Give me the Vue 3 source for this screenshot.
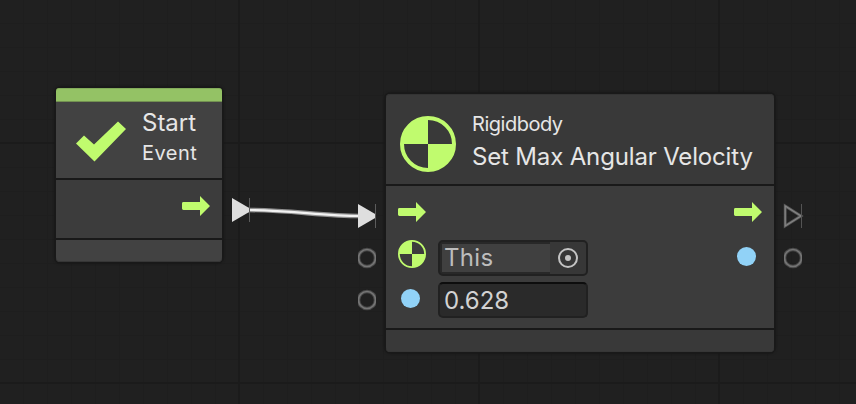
<script setup>
const arrow = 'M0 7.4Q0 6 1.4 6H18V0L28 10L18 20V14H1.4Q0 14 0 12.6Z'
const ports = [
  { x: 358, y: 247 },
  { x: 358, y: 289 },
  { x: 784, y: 247 },
]
</script>

<template>
  <main class="graph">
    <section class="node start">
      <div class="accent"></div>
      <header class="head">
        <svg class="check" width="50" height="42" viewBox="0 0 50 42">
          <path d="M0 22.5L8 14.5L18 23.5L42 0.5L50 8L18.5 40.5Z" fill="#c0fb6e" />
        </svg>
        <div class="titles">
          <div class="title">Start</div>
          <div class="sub">Event</div>
        </div>
      </header>
      <div class="body">
        <svg class="flow" width="28" height="20" viewBox="0 0 28 20"><path :d="arrow" /></svg>
      </div>
      <footer class="foot"></footer>
    </section>

    <section class="node unit">
      <header class="head">
        <svg class="rigid" width="56" height="56" viewBox="0 0 56 56">
          <circle cx="28" cy="28" r="26" />
          <path d="M28 28V2A26 26 0 0 0 2 28ZM28 28H54A26 26 0 0 1 28 54Z" />
        </svg>
        <div class="titles">
          <div class="sub">Rigidbody</div>
          <div class="title">Set Max Angular Velocity</div>
        </div>
      </header>
      <div class="body">
        <div class="col">
          <div class="row">
            <svg class="flow" width="28" height="20" viewBox="0 0 28 20"><path :d="arrow" /></svg>
          </div>
          <div class="row">
            <svg class="rigid small" width="28" height="28" viewBox="0 0 28 28">
              <circle cx="14" cy="14" r="13.1" />
              <path d="M14 14V1A13 13 0 0 0 1 14ZM14 14H27A13 13 0 0 1 14 27Z" />
            </svg>
            <div class="field object">
              <span class="value">This</span>
              <span class="picker">
                <svg width="20" height="20" viewBox="0 0 20 20">
                  <circle cx="10" cy="10" r="9" fill="none" stroke="#c4c4c4" stroke-width="2" />
                  <circle cx="10" cy="10" r="3" fill="#c4c4c4" />
                </svg>
              </span>
            </div>
          </div>
          <div class="row">
            <span class="dot"></span>
            <div class="field number">0.628</div>
          </div>
        </div>
        <div class="col out">
          <div class="row">
            <svg class="flow" width="28" height="20" viewBox="0 0 28 20"><path :d="arrow" /></svg>
          </div>
          <div class="row"><span class="dot"></span></div>
        </div>
      </div>
      <footer class="foot"></footer>
    </section>

    <svg class="wires" width="856" height="404" viewBox="0 0 856 404">
      <path d="M248 210C288 210 324 216 360 216" fill="none" stroke="#8f8f8f" stroke-width="4.6" />
      <path d="M248 210C288 210 324 216 360 216" fill="none" stroke="#f2f2f2" stroke-width="2.2" />
      <path d="M232 198L250 208.5V211.5L232 222Z" fill="#dedede" />
      <path d="M358 204L376 214.5V217.5L358 228Z" fill="#dedede" />
      <path d="M249.5 198V222M375.5 204V228" stroke="#5c5c5c" stroke-width="1" />
      <path d="M785.2 206L801 216L785.2 226Z" fill="none" stroke="#5a5a5a" stroke-width="2.8" />
      <path d="M785.2 206L801 216L785.2 226Z" fill="none" stroke="#858585" stroke-width="1.2" />
      <path d="M801.5 204V228" stroke="#545454" stroke-width="1" />
      <svg v-for="p in ports" :key="p.x + '-' + p.y" :x="p.x" :y="p.y" width="18" height="22">
        <circle cx="9" cy="11" r="8.5" fill="none" stroke="#484848" stroke-width="3.6" />
        <circle cx="9" cy="11" r="8.5" fill="none" stroke="#757575" stroke-width="1.7" />
      </svg>
    </svg>
  </main>
</template>

<style>
body {
  margin: 0;
  background: #202020;
}
</style>

<style scoped>
.graph {
  position: relative;
  width: 856px;
  height: 404px;
  overflow: hidden;
  font-family: Inter, "Liberation Sans", sans-serif;
  color: #e6e6e6;
  background-color: #202020;
  background-image:
    linear-gradient(90deg, #1b1b1b 2px, transparent 2px),
    linear-gradient(#1b1b1b 2px, transparent 2px),
    linear-gradient(90deg, #1e1e1e 1px, transparent 1px),
    linear-gradient(#1e1e1e 1px, transparent 1px);
  background-size: 240px 240px, 240px 240px, 24px 24px, 24px 24px;
  background-position: 238px 142px, 238px 142px, 23px 23px, 23px 23px;
}
.node {
  position: absolute;
  display: flex;
  flex-direction: column;
  border-radius: 4px;
  box-shadow: 0 0 0 1.5px #191919, 0 0 3px 1px #151515;
}
.start {
  left: 56px;
  top: 88px;
  width: 166px;
  height: 174px;
}
.unit {
  left: 386px;
  top: 94px;
  width: 388px;
  height: 258px;
}
.accent {
  box-sizing: border-box;
  height: 14px;
  background: #94c265;
  border-radius: 3px 3px 0 0;
  border-top: 1px solid #83ab5b;
  border-bottom: 1px solid #739151;
}
.head {
  display: flex;
  box-sizing: border-box;
  border-bottom: 2px solid #191919;
}
.start .head {
  height: 78px;
  padding: 6px 0 0 20px;
  gap: 16px;
  background: #424242;
}
.unit .head {
  height: 92px;
  padding: 17px 0 0 14px;
  gap: 16px;
  background: #393939;
  border-radius: 4px 4px 0 0;
  box-shadow: inset 0 1px 0 #333;
}
.check {
  margin-top: 13px;
}
.rigid {
  margin-top: 5px;
  fill: #c0fb6e;
}
.rigid circle {
  fill: none;
  stroke: #c0fb6e;
  stroke-width: 4;
}
.rigid.small {
  margin: -8px 0 0;
}
.rigid.small circle {
  stroke-width: 1.8;
}
.titles {
  white-space: nowrap;
}
.title {
  font-size: 24px;
  line-height: 30px;
}
.sub {
  font-size: 20px;
  line-height: 26px;
}
.start .sub {
  margin-top: 2px;
  letter-spacing: 0.45px;
}
.unit .title {
  margin-top: 5px;
  letter-spacing: -0.16px;
}
.unit .sub {
  letter-spacing: -0.48px;
}
.body {
  box-sizing: border-box;
  display: flex;
  justify-content: flex-end;
  background: #3c3c3c;
  border-bottom: 2px solid #191919;
}
.start .body {
  height: 60px;
  padding: 16px 12px 0 0;
}
.unit .body {
  height: 144px;
  justify-content: space-between;
  padding: 9px 12px 0;
}
.flow {
  fill: #c0fb6e;
}
.row {
  display: flex;
  align-items: center;
  height: 42px;
}
.row .flow {
  margin-top: -8px;
}
.out {
  display: flex;
  flex-direction: column;
  align-items: flex-end;
}
.dot {
  width: 19px;
  height: 19px;
  margin: -3px 7.5px 0 2.5px;
  border-radius: 50%;
  background: #91d2f7;
}
.out .dot {
  margin: -3px 6.5px 0 0;
}
.field {
  box-sizing: border-box;
  display: flex;
  width: 150px;
  height: 36px;
  margin-left: 12px;
  border: 2px solid #212121;
  border-radius: 5px;
  font-size: 24px;
  line-height: 32px;
}
.dot + .field {
  margin-left: 11px;
}
.object {
  padding: 2px 0 2px 2px;
  background: linear-gradient(90deg, #282828 110px, #373737 110px);
}
.value {
  width: 108px;
  height: 28px;
  line-height: 28px;
  text-indent: 2px;
  letter-spacing: 0.3px;
  color: #bdbdbd;
  background: #404040;
}
.picker {
  display: flex;
  flex: 1;
  align-items: center;
  justify-content: center;
}
.number {
  padding-left: 4px;
  line-height: 34px;
  color: #d2d2d2;
  background: #2a2a2a;
  border-top-color: #0d0d0d;
}
.foot {
  box-sizing: border-box;
  height: 22px;
  background: #424242;
  border-radius: 0 0 4px 4px;
  box-shadow: inset 0 -1px 0 #363636;
}
.unit .foot {
  background: #393939;
}
.wires {
  position: absolute;
  left: 0;
  top: 0;
}
</style>
